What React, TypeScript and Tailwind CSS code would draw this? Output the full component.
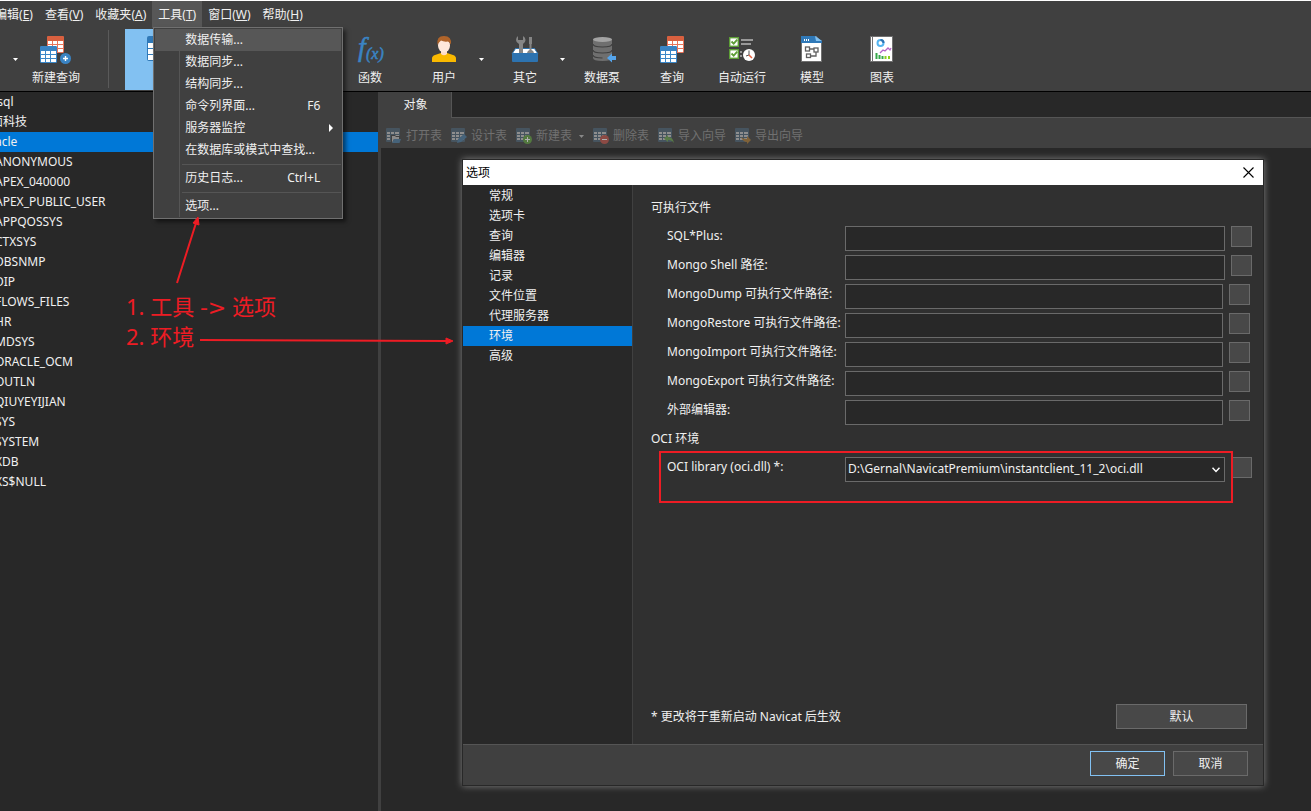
import { useState } from 'react';
import type { ReactNode } from 'react';

const menus = [
  { name: '编辑', key: 'E' },
  { name: '查看', key: 'V' },
  { name: '收藏夹', key: 'A' },
  { name: '工具', key: 'T' },
  { name: '窗口', key: 'W' },
  { name: '帮助', key: 'H' },
];

const toolMenu = [
  [
    { name: '数据传输...', active: true },
    { name: '数据同步...' },
    { name: '结构同步...' },
    { name: '命令列界面...', shortcut: 'F6' },
    { name: '服务器监控', submenu: true },
    { name: '在数据库或模式中查找...' },
  ],
  [{ name: '历史日志...', shortcut: 'Ctrl+L' }],
  [{ name: '选项...' }],
] as { name: string; active?: boolean; shortcut?: string; submenu?: boolean }[][];

const connections = [
  { name: 'mysql', indent: '-ml-5' },
  { name: '方面科技', indent: '-ml-[21px]' },
  { name: 'oracle', indent: '-ml-[17px]', selected: true },
];

const schemas = [
  'ANONYMOUS', 'APEX_040000', 'APEX_PUBLIC_USER', 'APPQOSSYS', 'CTXSYS', 'DBSNMP',
  'DIP', 'FLOWS_FILES', 'HR', 'MDSYS', 'ORACLE_OCM', 'OUTLN', 'QIUYEYIJIAN', 'SYS',
  'SYSTEM', 'XDB', 'XS$NULL',
];

const optionPages = ['常规', '选项卡', '查询', '编辑器', '记录', '文件位置', '代理服务器', '环境', '高级'];

const pathFields = [
  { id: 'sqlplus', label: 'SQL*Plus:', end: 'mr-[11px]' },
  { id: 'mongo-shell', label: 'Mongo Shell 路径:', end: 'mr-[11px]' },
  { id: 'mongodump', label: 'MongoDump 可执行文件路径:', end: 'mr-[13px]' },
  { id: 'mongorestore', label: 'MongoRestore 可执行文件路径:', end: 'mr-[13px]' },
  { id: 'mongoimport', label: 'MongoImport 可执行文件路径:', end: 'mr-[13px]' },
  { id: 'mongoexport', label: 'MongoExport 可执行文件路径:', end: 'mr-[13px]' },
  { id: 'editor', label: '外部编辑器:', end: 'mr-[13px]' },
];

/* Icons */

const Grid = ({ x, y, color, head }: { x: number; y: number; color: string; head: string }) => (
  <g transform={`translate(${x} ${y})`}>
    <rect width="17" height="17" rx="1.5" fill={color} />
    <rect width="17" height="5" rx="1.5" fill={head} />
    {[5, 9, 13].map((row) =>
      [1, 6, 11].map((col) => (
        <rect key={`${row}-${col}`} x={col} y={row} width={col === 11 ? 5 : 4} height="3" fill="#fff" />
      ))
    )}
  </g>
);

const QueryIcon = ({ plus }: { plus?: boolean }) => (
  <svg width="32" height="28" viewBox="0 0 32 28">
    <g transform={plus ? undefined : 'translate(4 0)'}>
      <Grid x={7} y={0} color="#e8745a" head="#d9603f" />
      <Grid x={0} y={10} color="#3b87c8" head="#3a84c4" />
    </g>
    {plus && (
      <>
        <circle cx="25.5" cy="22.5" r="5.5" fill="#3a84c4" />
        <path d="M25.5 20v5M23 22.5h5" stroke="#fff" strokeWidth="1.4" />
      </>
    )}
  </svg>
);

const TableIcon = () => (
  <svg width="26" height="26" viewBox="0 0 26 26">
    <rect width="26" height="25" rx="2" fill="#3079b8" />
    {[7, 13, 19].map((row) =>
      [1, 9, 17].map((col) => <rect key={`${row}-${col}`} x={col} y={row} width="7" height="5" fill="#fff" />)
    )}
  </svg>
);

const FunctionIcon = () => (
  <svg width="32" height="28" viewBox="0 0 32 28" fill="#3a84c4" stroke="#3a84c4" strokeWidth="0.5">
    <text x="4" y="20" fontSize="28" fontStyle="italic" fontFamily="'Liberation Serif', serif">f</text>
    <text x="12" y="23" fontSize="16" fontStyle="italic" fontFamily="'Liberation Serif', serif">(x)</text>
  </svg>
);

const UserIcon = () => (
  <svg width="26" height="28" viewBox="0 0 26 28">
    <path d="M1 26v-3.500q0-2.500 3-3.500l6-2h6l6 2q3 1 3 3.500V26z" fill="#fab900" />
    <path d="M10 14h6v4q-3 2.500-6 0z" fill="#ffdcc8" />
    <ellipse cx="13" cy="9.500" rx="6" ry="7" fill="#ffe8da" />
    <path d="M6.500 9Q5 0 13 0t7 8.500q-1-2-3-3-4.500 0.500-7-1-2.500 2-3.500 4.500z" fill="#b0642a" />
  </svg>
);

const OtherIcon = () => (
  <svg width="28" height="28" viewBox="0 0 28 28">
    <path d="M4.500 12.500h19l3.500 5.500H1z" fill="#fff" stroke="#2d73b0" />
    <path d="M7 0v4h5V0q2.500 1.500 2.500 4T12 8v9H8V8Q5 6.500 5 4T7 0z" fill="#858585" />
    <path d="M18 1h3v7h-0.500v6q2 0.500 2.500 3h-7q0.500-2.500 2.500-3V8H18z" fill="#858585" />
    <rect x="1" y="17" width="26" height="9" rx="1" fill="#2d73b0" />
  </svg>
);

const PumpIcon = () => (
  <svg width="28" height="28" viewBox="0 0 28 28">
    <path d="M5 3v19q0 3 9.500 3t9.500-3V3z" fill="#6f6f6f" />
    <ellipse cx="14.500" cy="3.500" rx="9.500" ry="2.500" fill="#a3a3a3" />
    <path d="M5 8q0 3 9.500 3T24 8M5 14q0 3 9.500 3t9.500-3M5 19q0 3 9.500 3" stroke="#404040" strokeWidth="1.200" fill="none" />
    <path d="M19 22l5-4.500V20h4v4h-4v2.500z" fill="#55a5ec" />
  </svg>
);

const AutomationIcon = () => (
  <svg width="28" height="28" viewBox="0 0 28 28">
    {[1, 13].map((y) => (
      <g key={y}>
        <rect x="1.700" y={y + 0.7} width="8.600" height="8.600" fill="#fff" stroke="#5d9e36" strokeWidth="1.400" />
        <path d={`M3.500 ${y + 4.5}l2.200 2.200 3.500-4`} stroke="#5d9e36" strokeWidth="1.800" fill="none" />
      </g>
    ))}
    <path d="M13 4h12M13 8h10" stroke="#999" strokeWidth="2" />
    <path d="M13 15v2M13 19v2" stroke="#999" strokeWidth="2" />
    <circle cx="21" cy="19" r="6" fill="#fff" />
    <path d="M21 14.500V19l-3 1" stroke="#555" fill="none" />
    <path d="M21 19l3 3" stroke="#e8603f" strokeWidth="1.500" />
  </svg>
);

const ModelIcon = () => (
  <svg width="22" height="28" viewBox="0 0 22 28">
    <path d="M0.500 0.500h15l5 5v20h-20z" fill="#fff" stroke="#707070" />
    <path d="M0 0h14l7 5v2H0z" fill="#3079b8" />
    <path d="M14 0l7 5h-6z" fill="#82c1f0" />
    <path d="M3 4h1M5 4h1M7 4h1" stroke="#fff" strokeWidth="2" />
    <g fill="none" stroke="#606060" strokeWidth="1.300">
      <rect x="4.500" y="11" width="4" height="4" />
      <rect x="13" y="12" width="4" height="4" />
      <rect x="5.500" y="18" width="4" height="3.500" />
      <path d="M8.500 13H13M15 16v4H9.500" />
    </g>
  </svg>
);

const ChartIcon = () => (
  <svg width="24" height="28" viewBox="0 0 24 28">
    <rect x="0.500" y="0.500" width="22" height="25" fill="#fff" stroke="#707070" />
    <path d="M2.500 0v26" stroke="#707070" />
    <circle cx="10.500" cy="7" r="3" fill="none" stroke="#55b5f0" strokeWidth="2" />
    <path d="M10.500 4a3 3 0 0 1 3 3" fill="none" stroke="#2d73b0" strokeWidth="2" />
    <path d="M10 17l3-3 2 1 3-3 2 2 1-2" fill="none" stroke="#b565c8" strokeWidth="1.300" />
    <path d="M6.500 17v6M9.500 19v4M12.500 20v3" stroke="#36a84a" strokeWidth="2" />
    <path d="M15.500 20v3M19 20v3" stroke="#8ed020" strokeWidth="2" />
  </svg>
);

const badges: Record<string, ReactNode> = {
  open: (
    <>
      <path d="M5 7h4l1 1h4v8H5z" fill="#404040" />
      <path d="M6 8h3l1 1h3v2H8l-2 4z" fill="#8a8a8a" />
      <path d="M6 15l2-4h7l-1.500 4z" fill="#46637a" />
    </>
  ),
  design: <path d="M6 15l1-4 6-5 3 3-6 5z" fill="#46637a" />,
  add: (
    <>
      <circle cx="11.500" cy="11.500" r="4.500" fill="#53793f" />
      <path d="M11.500 9v5M9 11.500h5" stroke="#b0b0b0" />
    </>
  ),
  remove: (
    <>
      <circle cx="11.500" cy="11.500" r="4.500" fill="#8c4a44" />
      <path d="M9 11.500h5" stroke="#b0b0b0" />
    </>
  ),
  import: <path d="M6 10.500L10 7v2q5 0 6 6-2-3-6-3v2z" fill="#587a48" />,
  export: <path d="M16 12l-4 4v-2q-4 0-6-5 2 2 6 2V8z" fill="#806238" />,
};

const SmallTableIcon = ({ badge }: { badge: string }) => (
  <svg width="16" height="16" viewBox="0 0 16 16">
    <rect width="14" height="14" rx="1" fill="#46545f" />
    {[4, 7, 10].map((row) =>
      [1, 5, 9].map((col) => (
        <rect key={`${row}-${col}`} x={col} y={row} width={col === 9 ? 4 : 3} height="2" fill="#8e8e8e" />
      ))
    )}
    {badges[badge]}
  </svg>
);

const Caret = ({ color = '#fff' }: { color?: string }) => (
  <svg width="5" height="3" viewBox="0 0 5 3" className="shrink-0">
    <path d="M0 0h5L2.500 3z" fill={color} />
  </svg>
);

const ToolButton = ({ label, children }: { label: string; children: ReactNode }) => (
  <button className="flex h-[62px] w-[70px] shrink-0 flex-col items-center pt-2">
    <span className="flex h-7 items-start justify-center">{children}</span>
    <span className="mt-1 leading-5 whitespace-nowrap">{label}</span>
  </button>
);

const Toolbar = () => (
  <div className="flex h-16 shrink-0 items-start overflow-hidden border-b border-black bg-[#404040]">
    <button aria-label="连接" className="flex h-[62px] w-[18px] shrink-0 items-center justify-end">
      <Caret />
    </button>
    <div className="ml-[3px] flex">
      <ToolButton label="新建查询"><QueryIcon plus /></ToolButton>
    </div>
    <div className="mt-0.5 ml-[17px] h-[58px] w-px shrink-0 bg-[#5a5a5a]" />
    <button aria-label="表" className="mt-px ml-4 flex h-[61px] w-[210px] shrink-0 bg-[#82c1f2] pt-[7px] pl-[22px]">
      <TableIcon />
    </button>
    <ToolButton label="函数"><FunctionIcon /></ToolButton>
    <div className="flex w-[81px] shrink-0 items-center pl-1">
      <ToolButton label="用户"><UserIcon /></ToolButton>
      <Caret />
    </div>
    <div className="flex w-[81px] shrink-0 items-center pl-1">
      <ToolButton label="其它"><OtherIcon /></ToolButton>
      <Caret />
    </div>
    <ToolButton label="数据泵"><PumpIcon /></ToolButton>
    <ToolButton label="查询"><QueryIcon /></ToolButton>
    <ToolButton label="自动运行"><AutomationIcon /></ToolButton>
    <ToolButton label="模型"><ModelIcon /></ToolButton>
    <ToolButton label="图表"><ChartIcon /></ToolButton>
  </div>
);

const ToolsMenu = () => (
  <div className="absolute top-[26px] left-px z-30 w-[190px] border border-[#707070] bg-[#404040] p-px shadow-[3px_3px_4px_rgba(0,0,0,0.5)]">
    {toolMenu.map((group, index) => (
      <div key={index}>
        {index > 0 && (
          <div className="flex h-1.5 items-center pl-6">
            <div className="h-1.5 w-px bg-[#555]" />
            <div className="ml-0.5 h-px flex-1 bg-[#555]" />
          </div>
        )}
        {group.map((item) => (
          <button
            key={item.name}
            className={`flex h-[22px] w-full items-center pl-6 text-left ${item.active ? 'bg-[#575757]' : ''}`}
          >
            <span className={`h-full w-px ${item.active ? '' : 'bg-[#555]'}`} />
            <span className="flex-1 pl-[5px] whitespace-nowrap">{item.name}</span>
            {item.shortcut && <span className="pr-[21px]">{item.shortcut}</span>}
            {item.submenu && (
              <svg width="4" height="8" viewBox="0 0 4 8" className="mr-2">
                <path d="M0 0l4 4-4 4z" fill="#fff" />
              </svg>
            )}
          </button>
        ))}
      </div>
    ))}
  </div>
);

const MenuBar = () => (
  <nav className="flex h-7 shrink-0 border-t border-white bg-[#404040]">
    <div className="-ml-[11px] flex">
      {menus.map((menu) => (
        <div key={menu.key} className="relative">
          <button className={`h-[27px] px-1.5 whitespace-nowrap ${menu.key === 'T' ? 'bg-[#575757]' : ''}`}>
            {menu.name}(<span className="underline">{menu.key}</span>)
          </button>
          {menu.key === 'T' && <ToolsMenu />}
        </div>
      ))}
    </div>
  </nav>
);

const Sidebar = () => (
  <ul className="w-[378px] shrink-0 overflow-hidden">
    {connections.map((item) => (
      <li key={item.name} className={`h-5 leading-5 ${item.selected ? 'bg-[#0078d7]' : ''}`}>
        <span className={item.indent}>{item.name}</span>
      </li>
    ))}
    {schemas.map((name) => (
      <li key={name} className="h-5 leading-5">
        <span className="-ml-[5px]">{name}</span>
      </li>
    ))}
  </ul>
);

const ObjectPane = () => (
  <main className="flex min-w-0 flex-1 flex-col border-l-[3px] border-[#404040]">
    <div className="-ml-[3px] flex h-[26px]">
      <button className="w-[74px] border-r border-[#555] bg-[#404040] pl-0.5">对象</button>
      <div className="flex-1 border-b border-[#555]" />
    </div>
    <div className="flex h-[30px] items-center gap-[9px] bg-[#404040] pt-1.5 pl-[5px] text-[#707070]">
      {[
        ['open', '打开表'],
        ['design', '设计表'],
        ['add', '新建表'],
        ['remove', '删除表'],
        ['import', '导入向导'],
        ['export', '导出向导'],
      ].map(([icon, label]) => (
        <button key={icon} disabled className="flex items-center gap-1 whitespace-nowrap">
          <SmallTableIcon badge={icon} />
          {label}
          {icon === 'add' && <span className="flex w-2 justify-end"><Caret color="#888" /></span>}
        </button>
      ))}
    </div>
  </main>
);

const BrowseButton = ({ label }: { label: string }) => (
  <button aria-label={label} className="size-[21px] shrink-0 border border-[#6a6a6a] bg-[#484848]" />
);

const OptionsDialog = () => {
  const [page, setPage] = useState('环境');

  return (
    <section
      role="dialog"
      aria-label="选项"
      className="absolute top-[159px] right-[47px] bottom-[25px] left-[462px] z-10 flex flex-col border border-[#282828] bg-[#303030] shadow-[0_0_7px_0_#808080]"
    >
      <header className="flex h-[25px] shrink-0 items-center justify-between bg-white pr-[9px] pl-[3px] text-black">
        <h2>选项</h2>
        <button aria-label="关闭">
          <svg width="11" height="11" viewBox="0 0 11 11">
            <path d="M0.500 0.500l10 10M10.500 0.500l-10 10" stroke="#000" strokeWidth="1.100" />
          </svg>
        </button>
      </header>

      <div className="flex min-h-0 flex-1">
        <div className="w-[170px] shrink-0 border-r border-[#404040] bg-[#282828] pt-px">
          {optionPages.map((name) => (
            <button
              key={name}
              onClick={() => setPage(name)}
              className={`block h-5 w-full pl-[26px] text-left leading-5 ${page === name ? 'bg-[#0078d7]' : ''}`}
            >
              {name}
            </button>
          ))}
        </div>

        <div className="flex min-w-0 flex-1 flex-col pt-[13px]">
          <h3 className="mb-2 ml-[18px] leading-5">可执行文件</h3>
          <div className="flex flex-col gap-1">
            {pathFields.map((field) => (
              <div key={field.id} className={`ml-[34px] flex items-start ${field.end}`}>
                <label htmlFor={field.id} className="w-[178px] shrink-0 leading-5 whitespace-nowrap">
                  {field.label}
                </label>
                <input
                  id={field.id}
                  type="text"
                  className="mr-1.5 h-[25px] min-w-0 flex-1 border border-[#6a6a6a] bg-[#282828] px-1 outline-none"
                />
                <BrowseButton label={`浏览 ${field.label}`} />
              </div>
            ))}
          </div>

          <h3 className="mt-1 ml-[18px] leading-5">OCI 环境</h3>
          <div className="relative mt-2 mr-[11px] ml-[34px] flex items-start">
            <label htmlFor="oci" className="w-[178px] shrink-0 leading-5 whitespace-nowrap">OCI library (oci.dll) *:</label>
            <div className="relative mr-1.5 min-w-0 flex-1">
              <select id="oci" className="h-[25px] w-full appearance-none border border-[#6a6a6a] bg-[#282828] pb-0.5 pl-0.5 outline-none">
                <option>D:\Gernal\NavicatPremium\instantclient_11_2\oci.dll</option>
              </select>
              <svg width="8" height="6" viewBox="0 0 8 6" className="pointer-events-none absolute top-2.5 right-[5px]">
                <path d="M0.500 0.800L4 4.500 7.500 0.800" fill="none" stroke="#fff" strokeWidth="1.500" />
              </svg>
            </div>
            <BrowseButton label="浏览 OCI library" />
            <div className="pointer-events-none absolute -top-1.5 right-[19px] -left-2 h-[52px] border-2 border-[#ed1c24]" />
          </div>

          <div className="mt-auto mr-4 mb-[15px] ml-[18px] flex items-center justify-between">
            <p>* 更改将于重新启动 Navicat 后生效</p>
            <button className="h-[25px] w-[131px] border border-[#6a6a6a] bg-[#484848]">默认</button>
          </div>
        </div>
      </div>

      <footer className="flex h-[41px] shrink-0 justify-end gap-2 border-t border-[#555] bg-[#404040] pt-1.5 pr-[15px]">
        <button className="h-[25px] w-[75px] border border-[#82c1f2] bg-[#484848]">确定</button>
        <button className="h-[25px] w-[75px] border border-[#6a6a6a] bg-[#484848]">取消</button>
      </footer>
    </section>
  );
};

const Notes = () => (
  <>
    <ol className="absolute top-[292px] left-[126px] z-20 text-[22px] leading-[29px] whitespace-nowrap text-[#ed1c24]">
      <li>1. 工具 <span className="font-['DejaVu_Sans',sans-serif]">-&gt;</span> 选项</li>
      <li>2. 环境</li>
    </ol>
    <svg width="460" height="360" viewBox="0 0 460 360" className="pointer-events-none absolute top-0 left-0 z-40">
      <g stroke="#ed1c24" strokeWidth="2" fill="#ed1c24">
        <path d="M177 283L196 223M200 340l247 1" />
        <path d="M198 217l1 8-6-2zM453 341l-7 3v-6z" strokeWidth="1" />
      </g>
    </svg>
  </>
);

const App = () => (
  <div className="relative flex min-h-screen flex-col overflow-hidden bg-[#282828] font-['Noto_Sans','Noto_Sans_CJK_SC',sans-serif] text-[12px] text-[#f0f0f0]">
    <MenuBar />
    <Toolbar />
    <div className="flex flex-1">
      <Sidebar />
      <ObjectPane />
    </div>
    <OptionsDialog />
    <Notes />
  </div>
);

export default App;
